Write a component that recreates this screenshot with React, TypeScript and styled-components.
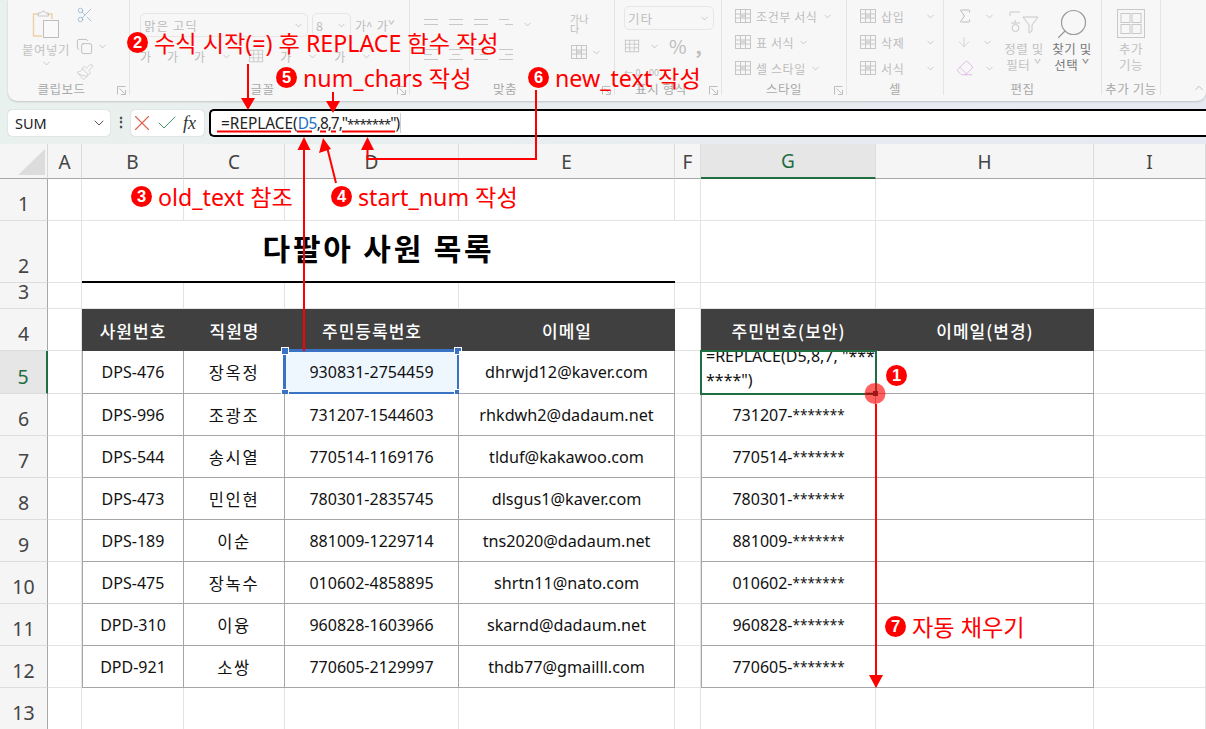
import React from 'react';
import styled, { createGlobalStyle } from 'styled-components';
import {
  ArrowDown,
  Check,
  ChevronDown,
  ChevronUp,
  Copy,
  Eraser,
  Paintbrush,
  Scissors,
  Search,
  Sigma,
  X,
} from 'lucide-react';

const GlobalStyle = createGlobalStyle`
  html, body { margin: 0; padding: 0; background: #fff; }
  body { font-family: "Noto Sans", "Noto Sans CJK KR", sans-serif; }
`;

const Page = styled.div`
  position: relative;
  width: 1206px;
  height: 729px;
  overflow: hidden;
  background: linear-gradient(90deg, #e9f1ee, #e7e9f2);
`;

const Ribbon = styled.div`
  display: flex;
  height: 101px;
  margin-left: 8px;
  background: #f7f7f7;
  border-radius: 0 0 9px 9px;
  box-shadow: 0 1px 2px rgba(0, 0, 0, 0.18);
  color: #bcbcbc;
  font-family: "Noto Sans CJK KR", sans-serif;
  font-size: 12px;
`;

const Group = styled.div<{ $w: number; $pad?: number }>`
  position: relative;
  flex: 0 0 ${(p) => p.$w}px;
  height: 95px;
  box-sizing: border-box;
  padding: 6px 0 0 ${(p) => p.$pad ?? 8}px;
  border-right: 1px solid #e4e4e4;
  display: flex;
  gap: 6px;
`;

const GroupLabel = styled.div<{ $launcher?: boolean }>`
  position: absolute;
  left: 0;
  right: ${(p) => (p.$launcher ? 14 : 0)}px;
  bottom: -3px;
  text-align: center;
  font-size: 12.5px;
  letter-spacing: 0.5px;
  color: #a9a9a9;
`;

const Launcher = styled.svg`
  position: absolute;
  right: 3px;
  bottom: 0;
`;

const Col = styled.div<{ $gap?: number; $w?: number; $mt?: number; $ml?: number }>`
  display: flex;
  flex-direction: column;
  gap: ${(p) => p.$gap ?? 6}px;
  margin-top: ${(p) => p.$mt ?? 0}px;
  margin-left: ${(p) => p.$ml ?? 0}px;
  ${(p) => (p.$w ? `width: ${p.$w}px;` : '')}
`;

const Line = styled.div<{ $gap?: number; $mt?: number; $h?: number; $spaced?: boolean }>`
  display: flex;
  align-items: center;
  gap: ${(p) => p.$gap ?? 4}px;
  height: ${(p) => p.$h ?? 20}px;
  margin-top: ${(p) => p.$mt ?? 0}px;
  white-space: nowrap;
  ${(p) => (p.$spaced ? 'letter-spacing: 0.6px;' : '')}
`;

const ItemText = styled.span`
  width: 40px;
`;

const Combo = styled.div<{ $w: number }>`
  width: ${(p) => p.$w}px;
  height: 24px;
  box-sizing: border-box;
  border: 1px solid #e6e6e6;
  border-radius: 5px;
  padding: 0 3px;
  display: flex;
  align-items: center;
  justify-content: space-between;
  font-size: 12.5px;
  letter-spacing: 1px;
`;

const Glyph = styled.span<{ $bold?: boolean }>`
  font-size: 19px;
  font-weight: ${(p) => (p.$bold ? 700 : 400)};
  line-height: 20px;
`;

const WrapGlyph = styled.div`
  width: 26px;
  margin-top: 8px;
  height: 22px;
  font-size: 10px;
  line-height: 10px;
`;

const Decimal = styled.span`
  font-size: 9px;
`;

const BigButton = styled.div<{ $dark?: boolean; $w: number }>`
  width: ${(p) => p.$w}px;
  display: flex;
  flex-direction: column;
  align-items: center;
  text-align: center;
  font-size: 12.5px;
  line-height: 16px;
  letter-spacing: 0.5px;
  color: ${(p) => (p.$dark ? '#777' : '#c2c2c2')};
`;

const BigLabel = styled.div<{ $mt?: number }>`
  margin-top: ${(p) => p.$mt ?? 5}px;
`;

const IconSlot = styled.div<{ $h: number; $mt?: number }>`
  height: ${(p) => p.$h}px;
  margin-top: ${(p) => p.$mt ?? 0}px;
`;

const Collapse = styled.div`
  flex: 1;
  display: flex;
  align-items: flex-end;
  justify-content: flex-end;
  padding-bottom: 6px;
`;

const FormulaBar = styled.div`
  display: flex;
  align-items: flex-start;
  height: 43px;
  padding: 8px 0 0 8px;
  box-sizing: border-box;
`;

const NameBox = styled.div`
  width: 102px;
  height: 26px;
  margin-top: 1px;
  box-sizing: border-box;
  background: #fff;
  border-radius: 4px;
  box-shadow: 0 0 1px rgba(0, 0, 0, 0.35);
  padding: 0 3px 0 7px;
  display: flex;
  align-items: center;
  justify-content: space-between;
  font-size: 14.5px;
  color: #222;
`;

const Dots = styled.div`
  width: 21px;
  margin-top: 3px;
  text-align: center;
  font-size: 14px;
  font-weight: 700;
  color: #444;
`;

const FxBox = styled.div`
  width: 73px;
  height: 26px;
  margin-top: 1px;
  box-sizing: border-box;
  background: #fff;
  border-radius: 4px;
  box-shadow: 0 0 1px rgba(0, 0, 0, 0.35);
  display: flex;
  align-items: center;
`;

const Cancel = styled(X)`
  margin-left: -2px;
  flex: none;
`;

const FxMark = styled.span`
  margin-left: 4px;
  font-family: "Liberation Serif", serif;
  font-style: italic;
  font-size: 18px;
  color: #333;
`;

const Formula = styled.div`
  flex: 1;
  margin-left: 5px;
  height: 28px;
  box-sizing: border-box;
  background: #fff;
  border: 2px solid #000;
  border-right: 0;
  border-radius: 5px 0 0 5px;
  padding: 0 0 0 10px;
  display: flex;
  align-items: center;
  font-size: 15.4px;
  color: #222;
  white-space: pre;
`;

const Ref = styled.span`
  color: #1d6fc4;
  letter-spacing: -0.5px;
`;

const Args = styled.span`
  letter-spacing: -1px;
`;

const FormulaStars = styled.span`
  font-size: 13px;
`;

const Caret = styled.span`
  width: 1px;
  height: 20px;
  background: #cfcfcf;
  margin-left: 1px;
`;

const Sheet = styled.div`
  display: grid;
  grid-template-columns: 48px 34px 102px 101px 174px 216px 26px 175px 218px 112px;
  grid-template-rows: 35px 42px 62px 26px 42px 43px repeat(8, 42px);
  background: #fff;
`;

const Corner = styled.div`
  position: relative;
  background: #f5f5f5;
  border-right: 1px solid #d8d8d8;
  border-bottom: 1px solid #a8a8a8;
  &::after {
    content: '';
    position: absolute;
    right: 2px;
    bottom: 3px;
    border-style: solid;
    border-width: 0 0 26px 27px;
    border-color: transparent transparent #dcdcdc transparent;
  }
`;

const ColHead = styled.div<{ $active?: boolean }>`
  display: flex;
  align-items: center;
  justify-content: center;
  box-sizing: border-box;
  padding-top: 1px;
  font-size: 19px;
  color: ${(p) => (p.$active ? '#1e6e42' : '#444')};
  background: ${(p) => (p.$active ? '#e6e6e6' : '#f5f5f5')};
  border-right: 1px solid #dcdcdc;
  border-bottom: ${(p) => (p.$active ? '2px solid #1e6e42' : '1px solid #a8a8a8')};
`;

const RowHead = styled.div<{ $active?: boolean }>`
  display: flex;
  align-items: flex-end;
  justify-content: center;
  box-sizing: border-box;
  padding-bottom: 4px;
  font-size: 19.5px;
  line-height: 24px;
  color: ${(p) => (p.$active ? '#1e6e42' : '#444')};
  background: ${(p) => (p.$active ? '#e6e6e6' : '#f5f5f5')};
  border-right: ${(p) => (p.$active ? '2px solid #1e6e42' : '1px solid #a8a8a8')};
  border-bottom: 1px solid #dcdcdc;
`;

const Blank = styled.div`
  box-sizing: border-box;
  border-right: 1px solid #e3e3e3;
  border-bottom: 1px solid #e3e3e3;
`;

const Title = styled.div`
  grid-column: span 4;
  box-sizing: border-box;
  border-bottom: 2px solid #000;
  display: flex;
  align-items: center;
  justify-content: center;
  padding-bottom: 8px;
  font-family: "Noto Sans CJK KR", sans-serif;
  font-size: 30px;
  font-weight: 700;
  letter-spacing: 2.8px;
  color: #000;
`;

const Head = styled.div`
  background: #404040;
  color: #fff;
  display: flex;
  align-items: center;
  justify-content: center;
  font-family: "Noto Sans CJK KR", sans-serif;
  font-size: 17px;
  font-weight: 500;
  letter-spacing: 1px;
`;

const Cell = styled.div<{ $selected?: boolean }>`
  position: relative;
  box-sizing: border-box;
  display: flex;
  align-items: center;
  justify-content: center;
  border-right: 1px solid #a6a6a6;
  border-bottom: 1px solid #a6a6a6;
  font-size: 16px;
  color: #111;
  background: ${(p) => (p.$selected ? '#eef6fe' : '#fff')};
`;

const LeftEdge = styled(Cell)`
  border-left: 1px solid #a6a6a6;
`;

const Person = styled.span`
  font-family: "Noto Sans CJK KR", sans-serif;
  font-size: 16.5px;
  letter-spacing: 1.6px;
`;

const Email = styled.span`
  font-size: 16.2px;
`;

const Stars = styled.span`
  font-size: 13.5px;
`;

const Range = styled.div`
  position: absolute;
  left: -2px;
  top: -2px;
  right: -2px;
  bottom: -2px;
  border: 3px solid #3a72c4;
`;

const Handle = styled.i<{ $r?: boolean; $b?: boolean }>`
  position: absolute;
  width: 6px;
  height: 6px;
  background: #3a72c4;
  border: 1px solid #fff;
  ${(p) => (p.$r ? 'right: -5px;' : 'left: -5px;')}
  ${(p) => (p.$b ? 'bottom: -5px;' : 'top: -5px;')}
`;

const EditCell = styled(LeftEdge)`
  align-items: flex-end;
  justify-content: flex-start;
  overflow: hidden;
  padding: 0 2px 1px 4px;
  white-space: pre;
  line-height: 24px;
  outline: 2px solid #1e6e42;
  outline-offset: -1px;
  z-index: 1;
`;

const Overlay = styled.svg`
  position: absolute;
  left: 0;
  top: 0;
  z-index: 3;
  pointer-events: none;
`;

const Note = styled.div<{ $x: number; $y: number }>`
  position: absolute;
  left: ${(p) => p.$x}px;
  top: ${(p) => p.$y}px;
  z-index: 4;
  height: 30px;
  display: flex;
  align-items: center;
  gap: 6px;
  font-family: "Noto Sans", "Noto Sans CJK KR", sans-serif;
  font-size: 23.2px;
  color: #f00;
  white-space: nowrap;
`;

const Badge = styled.span`
  flex: none;
  width: 21px;
  height: 21px;
  border-radius: 50%;
  background: #f00;
  color: #fff;
  display: flex;
  align-items: center;
  justify-content: center;
  font-family: "Liberation Sans", sans-serif;
  font-size: 16.5px;
  font-weight: 700;
`;

const columns = ['A', 'B', 'C', 'D', 'E', 'F', 'G', 'H', 'I'];

const rows = [
  ['DPS-476', '장옥정', '930831-2754459', 'dhrwjd12@kaver.com'],
  ['DPS-996', '조광조', '731207-1544603', 'rhkdwh2@dadaum.net'],
  ['DPS-544', '송시열', '770514-1169176', 'tlduf@kakawoo.com'],
  ['DPS-473', '민인현', '780301-2835745', 'dlsgus1@kaver.com'],
  ['DPS-189', '이순', '881009-1229714', 'tns2020@dadaum.net'],
  ['DPS-475', '장녹수', '010602-4858895', 'shrtn11@nato.com'],
  ['DPD-310', '이융', '960828-1603966', 'skarnd@dadaum.net'],
  ['DPD-921', '소쌍', '770605-2129997', 'thdb77@gmailll.com'],
];

const notes = [
  { n: 2, text: '수식 시작(=) 후 REPLACE 함수 작성', x: 127, y: 27 },
  { n: 5, text: 'num_chars 작성', x: 276, y: 62 },
  { n: 6, text: 'new_text 작성', x: 528, y: 62 },
  { n: 3, text: 'old_text 참조', x: 131, y: 181 },
  { n: 4, text: 'start_num 작성', x: 331, y: 181 },
  { n: 1, text: '', x: 886, y: 360 },
  { n: 7, text: '자동 채우기', x: 885, y: 611 },
];

const TextLines = ({ offsets }: { offsets: number[][] }) => (
  <svg width="18" height="16" viewBox="0 0 18 16" stroke="#c8c8c8" fill="none">
    {offsets.map(([a, b], i) => (
      <path key={i} d={`M${a} ${3 + i * 5}.5H${b}`} />
    ))}
  </svg>
);

const TableIcon = ({ size = 18, shade = '#d6d6d6' }: { size?: number; shade?: string }) => (
  <svg width={size} height={size} viewBox="0 0 18 18" fill="none" stroke="#c6c6c6">
    <rect x="1.5" y="2.5" width="15" height="13" />
    <path d="M1.5 7h15M1.5 11h15M6.5 2.5v13M11.5 2.5v13" />
    <rect x="7" y="7.5" width="4" height="3" fill={shade} stroke="none" />
  </svg>
);

const PasteIcon = () => (
  <svg width="28" height="29" viewBox="0 0 28 29" fill="none">
    <path d="M7 4H1.500v22H10" stroke="#ecd2a8" strokeWidth="1.5" />
    <path d="M15 4h5v5" stroke="#ecd2a8" strokeWidth="1.5" />
    <path d="M6 6V3h3l1.500-2h1.500l1.500 2h3v3z" stroke="#c8c8c8" />
    <rect x="11.500" y="10.500" width="15" height="17" stroke="#bdbdbd" fill="#f9f9f9" />
  </svg>
);

const FilterIcon = () => (
  <svg width="32" height="26" viewBox="0 0 32 26" fill="none" stroke="#c8c8c8">
    <path d="M2 2h10M2 2v4M15 7l6 8v8l3-2v-6l6-8z" />
    <path d="M3 13h9M7 10v3M4 18a3.500 3.500 0 1 0 7 0 3.500 3.500 0 1 0-7 0z" />
  </svg>
);

const AddinIcon = () => (
  <svg width="28" height="29" viewBox="0 0 28 29" fill="none" stroke="#c8c8c8">
    <rect x="0.500" y="0.500" width="27" height="28" />
    <rect x="4" y="4.500" width="9" height="9" />
    <rect x="15" y="4.500" width="9" height="9" />
    <rect x="4" y="15.500" width="9" height="9" />
    <rect x="15" y="15.500" width="9" height="9" />
  </svg>
);

const Corner9 = () => (
  <Launcher width="9" height="9" viewBox="0 0 9 9" fill="none" stroke="#bdbdbd">
    <path d="M8.500 4v4.500H4M.5 8.500v-8h8M2.500 2.500l5 5" />
  </Launcher>
);

const Chev = () => <ChevronDown size={11} strokeWidth={1.5} color="#b5b5b5" />;

const RibbonBar = () => (
  <Ribbon>
    <Group $w={122} $pad={14}>
      <BigButton $w={48}>
        <IconSlot $h={32} $mt={4}>
          <PasteIcon />
        </IconSlot>
        <BigLabel $mt={0}>붙여넣기</BigLabel>
        <Chev />
      </BigButton>
      <Col $gap={7}>
        <Scissors size={18} strokeWidth={1} color="#8fb0d0" />
        <Line $mt={5}>
          <Copy size={17} strokeWidth={1} color="#aaa" />
          <Chev />
        </Line>
        <Paintbrush size={18} strokeWidth={1} color="#c6c6c6" />
      </Col>
      <GroupLabel $launcher>클립보드</GroupLabel>
      <Corner9 />
    </Group>
    <Group $w={280} $pad={10}>
      <Col $gap={9}>
        <Line $gap={4} $h={24} $mt={7}>
          <Combo $w={168}>
            맑은 고딕
            <Chev />
          </Combo>
          <Combo $w={39}>
            8
            <Chev />
          </Combo>
          <span>가^</span>
          <span>가ˇ</span>
        </Line>
        <Line $gap={16}>
          <span>가</span>
          <span>가</span>
          <span>가</span>
          <Chev />
          <TableIcon size={16} shade="#f7f7f7" />
          <span>가</span>
          <Chev />
          <span>가</span>
          <Chev />
        </Line>
      </Col>
      <GroupLabel $launcher>글꼴</GroupLabel>
      <Corner9 />
    </Group>
    <Group $w={205} $pad={12}>
      <Col $gap={10} $w={131}>
        <Line $gap={7} $mt={8}>
          <TextLines offsets={[[2, 16], [2, 16]]} />
          <TextLines offsets={[[2, 16], [2, 16]]} />
          <TextLines offsets={[[2, 16], [2, 16]]} />
          <TextLines offsets={[[2, 12], [8, 16]]} />
          <Chev />
        </Line>
        <Line $gap={7}>
          <TextLines offsets={[[2, 16], [2, 10], [2, 16]]} />
          <TextLines offsets={[[2, 16], [5, 13], [2, 16]]} />
          <TextLines offsets={[[2, 16], [8, 16], [2, 16]]} />
          <TextLines offsets={[[2, 16], [8, 16], [2, 16]]} />
        </Line>
      </Col>
      <Col $gap={6} $ml={11}>
        <WrapGlyph>가나 다</WrapGlyph>
        <Line $gap={3}>
          <TableIcon />
          <Chev />
        </Line>
      </Col>
      <GroupLabel $launcher>맞춤</GroupLabel>
      <Corner9 />
    </Group>
    <Group $w={107} $pad={9}>
      <Col $gap={6}>
        <Combo $w={90}>
          기타
          <Chev />
        </Combo>
        <Line $gap={9}>
          <TableIcon size={16} shade="#f7f7f7" />
          <Chev />
          <Glyph>%</Glyph>
          <Glyph $bold>,</Glyph>
        </Line>
        <Line $gap={6}>
          <Decimal>←.0</Decimal>
          <Decimal>.00</Decimal>
        </Line>
      </Col>
      <GroupLabel $launcher>표시 형식</GroupLabel>
      <Corner9 />
    </Group>
    <Group $w={125} $pad={12}>
      <Col>
        {['조건부 서식', '표 서식', '셀 스타일'].map((label) => (
          <Line key={label} $gap={4} $spaced>
            <TableIcon />
            {label}
            <Chev />
          </Line>
        ))}
      </Col>
      <GroupLabel>스타일</GroupLabel>
      <Corner9 />
    </Group>
    <Group $w={97} $pad={12}>
      <Col>
        {['삽입', '삭제', '서식'].map((label) => (
          <Line key={label} $gap={4} $spaced>
            <TableIcon />
            <ItemText>{label}</ItemText>
            <Chev />
          </Line>
        ))}
      </Col>
      <GroupLabel>셀</GroupLabel>
    </Group>
    <Group $w={158} $pad={12}>
      <Col $w={42}>
        <Line $gap={10}>
          <Sigma size={18} strokeWidth={1} color="#aaa" />
          <Chev />
        </Line>
        <Line $gap={10}>
          <ArrowDown size={16} strokeWidth={1} color="#c4c4c4" />
          <Chev />
        </Line>
        <Line $gap={10}>
          <Eraser size={18} strokeWidth={1} color="#d6a8da" />
          <Chev />
        </Line>
      </Col>
      <BigButton $w={40}>
        <IconSlot $h={26} $mt={4}>
          <FilterIcon />
        </IconSlot>
        <BigLabel $mt={5}>정렬 및 필터 ˇ</BigLabel>
      </BigButton>
      <BigButton $w={44} $dark>
        <Search size={36} strokeWidth={0.8} color="#999" transform="scale(-1 1)" />
        <BigLabel $mt={-1}>찾기 및 선택 ˇ</BigLabel>
      </BigButton>
      <GroupLabel>편집</GroupLabel>
    </Group>
    <Group $w={59} $pad={15}>
      <BigButton $w={28}>
        <IconSlot $h={29} $mt={3}>
          <AddinIcon />
        </IconSlot>
        <BigLabel $mt={3}>추가 기능</BigLabel>
      </BigButton>
      <GroupLabel>추가 기능</GroupLabel>
    </Group>
    <Collapse>
      <ChevronUp size={14} strokeWidth={1} color="#999" />
    </Collapse>
  </Ribbon>
);

const Formulas = () => (
  <FormulaBar>
    <NameBox>
      SUM
      <ChevronDown size={16} strokeWidth={1.5} color="#555" />
    </NameBox>
    <Dots>⋮</Dots>
    <FxBox>
      <Cancel size={26} strokeWidth={1} color="#e0604f" />
      <Check size={24} strokeWidth={1} color="#4a9a68" />
      <FxMark>fx</FxMark>
    </FxBox>
    <Formula>
      =REPLACE(<Ref>D5</Ref>
      <Args>
        ,8,7,&quot;<FormulaStars>*******</FormulaStars>&quot;)
      </Args>
      <Caret />
    </Formula>
  </FormulaBar>
);

const Arrows = () => (
  <Overlay width="1206" height="729" viewBox="0 0 1206 729" fill="none" stroke="#f00" strokeWidth="2">
    <path d="M217 131.500h74M297 131.500h15M320 131.500h6M331 131.500h5M342 131.500h53" />
    <path d="M248 64v36M333 92v10M536 90v69H367.500v-12M304 351V149M336 183l-9-36M876 404v273" />
    <g fill="#f00" stroke="none">
      <path d="M248 110l-7-12h14z" />
      <path d="M333 113l-7-12h14z" />
      <path d="M367.500 137l-6.500 13h13z" />
      <path d="M304 137l-6.500 13h13z" />
      <path d="M323 138l-4 15 12-4z" />
      <path d="M876 688l-7-13h14z" />
      <circle cx="875" cy="393.500" r="10.500" opacity="0.62" />
    </g>
    <path d="M866 393.500h10" stroke="#8a1010" strokeWidth="1.500" />
    <rect x="873" y="391" width="5" height="5" fill="#a01818" stroke="none" />
  </Overlay>
);

const App = () => (
  <Page>
    <GlobalStyle />
    <RibbonBar />
    <Formulas />
    <Sheet>
      <Corner />
      {columns.map((c) => (
        <ColHead key={c} $active={c === 'G'}>
          {c}
        </ColHead>
      ))}

      <RowHead>1</RowHead>
      {columns.map((c) => (
        <Blank key={c} />
      ))}

      <RowHead>2</RowHead>
      <Blank />
      <Title>다팔아 사원 목록</Title>
      <Blank />
      <Blank />
      <Blank />
      <Blank />

      <RowHead>3</RowHead>
      {columns.map((c) => (
        <Blank key={c} />
      ))}

      <RowHead>4</RowHead>
      <Blank />
      <Head>사원번호</Head>
      <Head>직원명</Head>
      <Head>주민등록번호</Head>
      <Head>이메일</Head>
      <Blank />
      <Head>주민번호(보안)</Head>
      <Head>이메일(변경)</Head>
      <Blank />

      {rows.map((row, i) => (
        <React.Fragment key={row[0]}>
          <RowHead $active={i === 0}>{i + 5}</RowHead>
          <Blank />
          <LeftEdge>{row[0]}</LeftEdge>
          <Cell>
            <Person>{row[1]}</Person>
          </Cell>
          <Cell $selected={i === 0}>
            {row[2]}
            {i === 0 && (
              <Range>
                <Handle />
                <Handle $r />
                <Handle $b />
                <Handle $r $b />
              </Range>
            )}
          </Cell>
          <Cell>
            <Email>{row[3]}</Email>
          </Cell>
          <Blank />
          {i === 0 ? (
            <EditCell>{'=REPLACE(D5,8,7, "***\n****")'}</EditCell>
          ) : (
            <LeftEdge>
              {row[2].slice(0, 7)}
              <Stars>*******</Stars>
            </LeftEdge>
          )}
          <Cell />
          <Blank />
        </React.Fragment>
      ))}

      <RowHead>13</RowHead>
      {columns.map((c) => (
        <Blank key={c} />
      ))}
    </Sheet>
    <Arrows />
    {notes.map((note) => (
      <Note key={note.n} $x={note.x} $y={note.y}>
        <Badge>{note.n}</Badge>
        {note.text}
      </Note>
    ))}
  </Page>
);

export default App;
